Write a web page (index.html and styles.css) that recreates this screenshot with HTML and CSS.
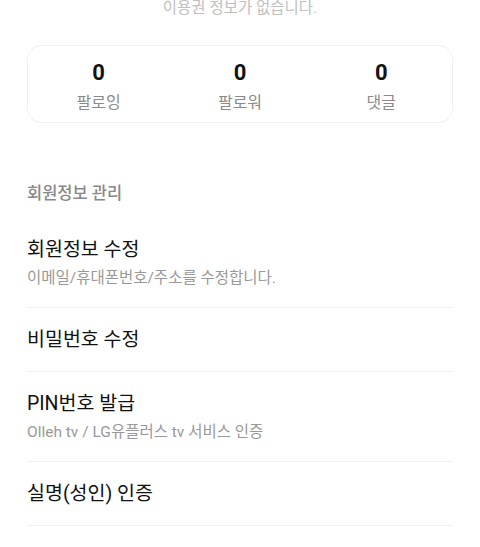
FILE: index.html
```html
<!DOCTYPE html>
<html lang="ko">
<head>
    <meta charset="UTF-8">
    <title>내 정보</title>
    <link rel="stylesheet" href="styles.css">
</head>
<body>
    <div class="page">
        <p class="notice">이용권 정보가 없습니다.</p>

        <div class="stats">
            <a class="stat" href="#">
                <strong>0</strong>
                <span>팔로잉</span>
            </a>
            <a class="stat" href="#">
                <strong>0</strong>
                <span>팔로워</span>
            </a>
            <a class="stat" href="#">
                <strong>0</strong>
                <span>댓글</span>
            </a>
        </div>

        <h2 class="section-title">회원정보 관리</h2>
        <ul class="menu">
            <li>
                <a href="#">
                    <span class="menu-title">회원정보 수정</span>
                    <span class="menu-desc">이메일/휴대폰번호/주소를 수정합니다.</span>
                </a>
            </li>
            <li>
                <a href="#">
                    <span class="menu-title">비밀번호 수정</span>
                </a>
            </li>
            <li>
                <a href="#">
                    <span class="menu-title">PIN번호 발급</span>
                    <span class="menu-desc">Olleh tv / LG유플러스 tv 서비스 인증</span>
                </a>
            </li>
            <li>
                <a href="#">
                    <span class="menu-title">실명(성인) 인증</span>
                </a>
            </li>
        </ul>
    </div>
</body>
</html>
```

FILE: styles.css
```css
*{
    margin: 0;
    padding: 0;
    box-sizing: border-box;
    list-style: none;
    text-decoration: none;
}
body{
    background: #fff;
    font-family: Roboto, "Noto Sans CJK KR", sans-serif;
    color: #111;
}
.page{
    padding: 0 27px;
}
.notice{
    font-size: 15.5px;
    line-height: 16px;
    color: #c0c0c0;
    text-align: center;
}

/* 팔로잉 / 팔로워 / 댓글 */
.stats{
    margin-top: 29px;
    display: grid;
    grid-template-columns: repeat(3, 1fr);
    border: 1px solid #efefef;
    border-radius: 14px;
    padding: 15px 0 9px;
}
.stat{
    display: flex;
    flex-direction: column;
    align-items: center;
    gap: 8px;
    color: #111;
}
.stat strong{
    font-size: 22px;
    line-height: 24px;
    font-weight: 700;
}
.stat span{
    font-size: 16px;
    line-height: 20px;
    color: #8a8a8a;
}

/* 회원정보 관리 */
.section-title{
    margin-top: 61px;
    font-size: 16.5px;
    line-height: 20px;
    font-weight: 500;
    color: #888;
}
.menu{
    margin-top: 14px;
}
.menu li{
    border-bottom: 1px solid #f2f2f2;
}
.menu li a{
    display: flex;
    flex-direction: column;
    gap: 6px;
    padding: 20px 0 19px;
}
.menu-title{
    font-size: 19.5px;
    line-height: 24px;
    color: #111;
}
.menu-desc{
    font-size: 15.5px;
    line-height: 20px;
    color: #999;
}
```
